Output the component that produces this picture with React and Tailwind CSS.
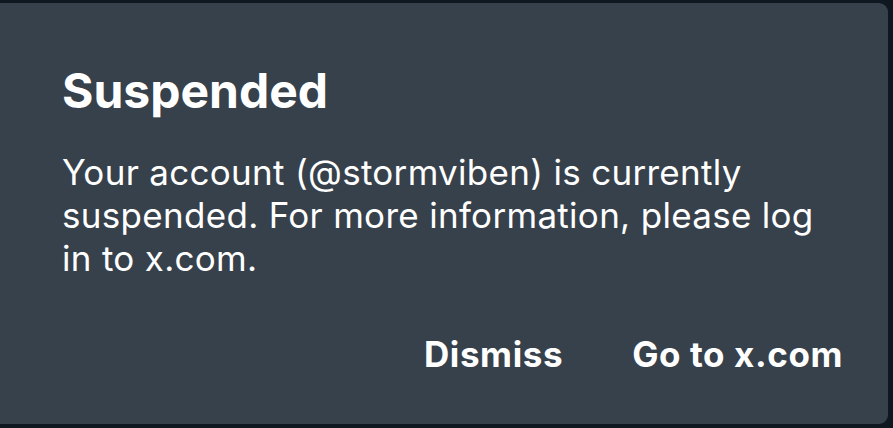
export default function App() {
  return (
    <div className="w-[893px] h-[428px] bg-[#0f1820] pt-[3px] pr-[5px] pb-[4px] overflow-hidden" style={{ fontFamily: 'Inter, "Noto Sans", sans-serif' }}>
      <div className="h-full bg-[#37414b] rounded-r-[9px] rounded-l-none flex flex-col pl-[62px] pr-[45px]">
        <h1 className="mt-[60px] text-[48px] leading-[56px] font-bold text-white">Suspended</h1>
        <p className="mt-[32px] max-w-[755px] text-[35px] leading-[43px] tracking-[0.3px] text-white">
          Your account (@stormviben) is currently suspended. For more information, please log in to x.com.
        </p>
        <div className="mt-auto mb-[50px] flex justify-end gap-[69px] text-[35px] leading-[40px] font-bold tracking-[0.6px] text-white">
          <span>Dismiss</span>
          <span>Go to x.com</span>
        </div>
      </div>
    </div>
  );
}
